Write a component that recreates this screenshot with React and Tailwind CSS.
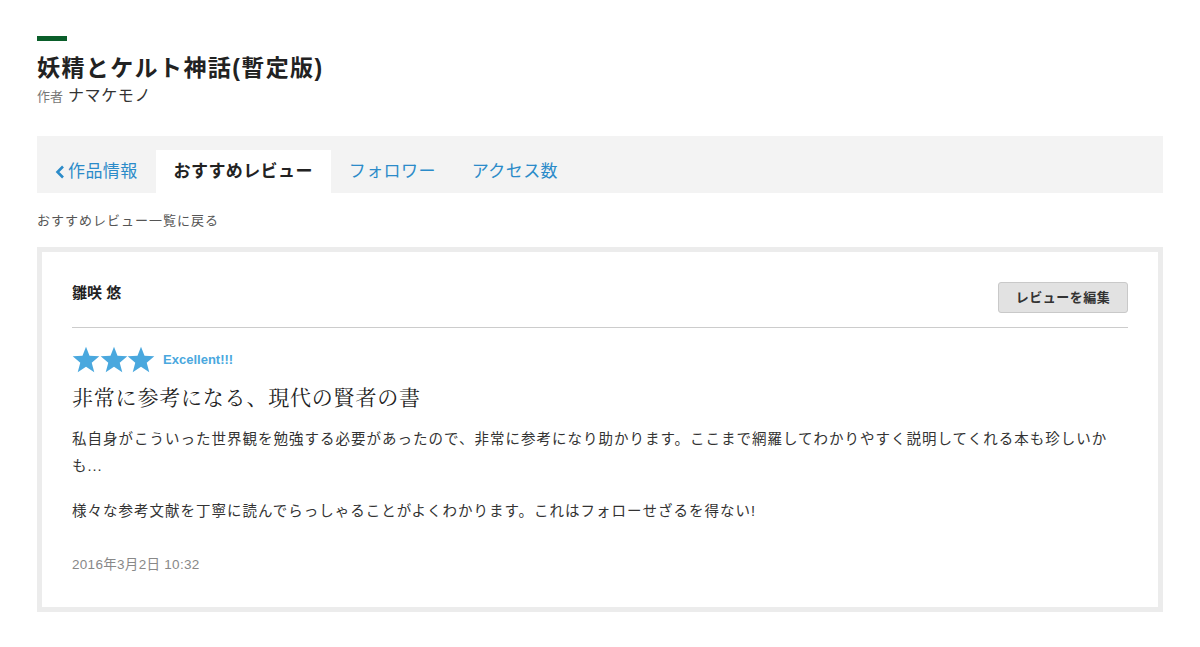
import React from "react";

const sans = { fontFamily: '"Helvetica Neue", "Liberation Sans", "Noto Sans CJK JP", sans-serif' };
const serif = { fontFamily: '"Noto Serif CJK JP", "Liberation Serif", "Noto Sans CJK JP", serif' };

function Star() {
  return (
    <svg width="28" height="27" viewBox="0 0 24 23" className="block -mr-[0.3px]">
      <polygon
        fill="#4aa8de"
        points="12,0.5 15,8.3 23.4,8.8 16.9,14.2 19.1,22.4 12,17.8 4.9,22.4 7.1,14.2 0.6,8.8 9,8.3"
      />
    </svg>
  );
}

function Tab({ children, active, back }) {
  if (active) {
    return (
      <div className="bg-white px-[18px] h-[43px] flex items-center text-[17px] font-bold text-[#222] tracking-[0.4px]">
        {children}
      </div>
    );
  }
  return (
    <div className="px-[18px] h-[43px] flex items-center text-[17px] text-[#2b8bc9] tracking-[0.4px]">
      {back && (
        <svg width="10" height="14" viewBox="0 0 10 14" className="mr-[3px]">
          <polyline points="8,1.5 2.5,7 8,12.5" fill="none" stroke="#2b8bc9" strokeWidth="2.6" />
        </svg>
      )}
      {children}
    </div>
  );
}

export default function App() {
  return (
    <div className="bg-white min-h-[647px] px-[37px] pt-[36px]" style={sans}>
      {/* Work header */}
      <div className="w-[30px] h-[5px] bg-[#0a5e2a]" />
      <h1 className="mt-[13px] text-[23px] leading-[28px] font-bold text-[#222] tracking-[1.4px]">
        妖精とケルト神話(暫定版)
      </h1>
      <div className="mt-[4px] flex items-baseline gap-[5px] leading-[20px]">
        <span className="text-[13px] text-[#777]">作者</span>
        <span className="text-[16px] text-[#333] tracking-[0.6px]">ナマケモノ</span>
      </div>

      {/* Tabs */}
      <div className="mt-[29px] bg-[#f3f3f3] h-[57px] flex items-end">
        <Tab back>作品情報</Tab>
        <Tab active>おすすめレビュー</Tab>
        <Tab>フォロワー</Tab>
        <Tab>アクセス数</Tab>
      </div>

      <p className="mt-[19px] text-[13px] leading-[18px] text-[#555] tracking-[1px]">おすすめレビュー一覧に戻る</p>

      {/* Review card */}
      <div className="mt-[17px] border-[5px] border-[#ececec] bg-white px-[30px] pt-[30px] pb-[33px]">
        <div className="flex justify-between items-start">
          <div className="text-[15px] leading-[21px] font-bold text-[#222]">雛咲 悠</div>
          <button className="w-[130px] h-[31px] bg-[#e2e2e2] border border-[#c9c9c9] rounded-[3px] text-[13px] font-bold text-[#333] tracking-[0.5px]">
            レビューを編集
          </button>
        </div>
        <div className="mt-[14px] h-px bg-[#cccccc]" />

        <div className="mt-[18px] flex items-center">
          <Star />
          <Star />
          <Star />
          <span className="ml-[8px] text-[13px] font-bold text-[#4aa8de]">Excellent!!!</span>
        </div>

        <h2 className="mt-[8px] text-[21px] leading-[30px] text-[#222] tracking-[0.8px]" style={serif}>
          非常に参考になる、現代の賢者の書
        </h2>

        <div className="mt-[15px] text-[14.5px] leading-[27px] text-[#333] tracking-[1px]">
          <p>
            私自身がこういった世界観を勉強する必要があったので、非常に参考になり助かります。ここまで網羅してわかりやすく説明してくれる本も珍しいかも...
          </p>
          <p className="mt-[18px]">
            様々な参考文献を丁寧に読んでらっしゃることがよくわかります。これはフォローせざるを得ない!
          </p>
        </div>

        <div className="mt-[31px] text-[13.5px] leading-[18px] text-[#888] tracking-[0.3px]">2016年3月2日 10:32</div>
      </div>
    </div>
  );
}
